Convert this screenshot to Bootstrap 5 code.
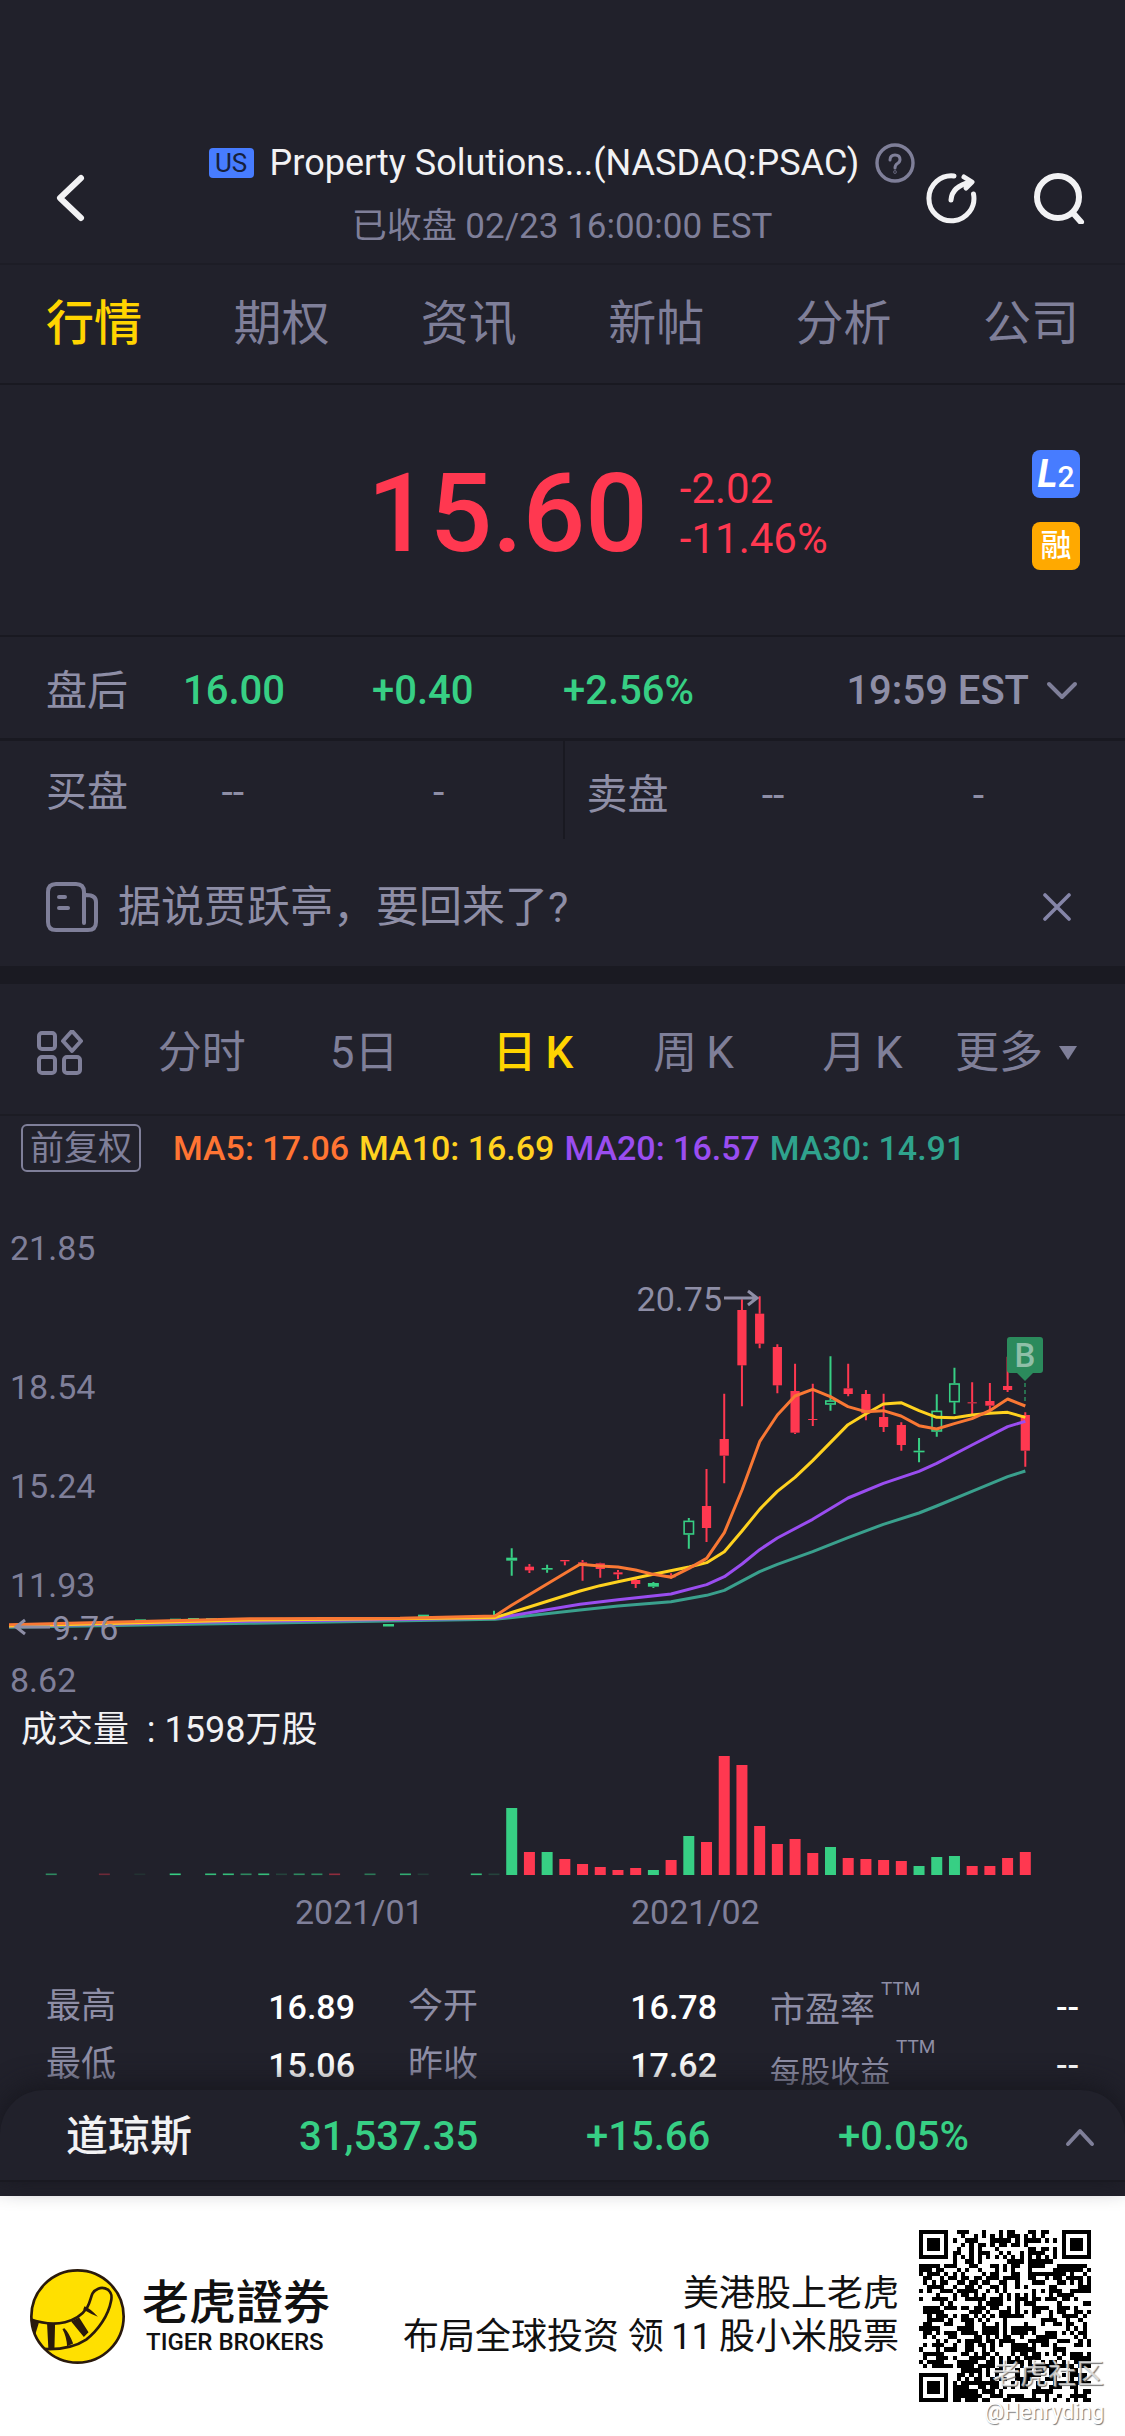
<!DOCTYPE html>
<html lang="zh-CN">
<head>
<meta charset="utf-8">
<meta name="viewport" content="width=device-width, initial-scale=1">
<title>PSAC 行情</title>
<link href="https://cdn.jsdelivr.net/npm/bootstrap@5.3.0/dist/css/bootstrap.min.css" rel="stylesheet">
<style>
:root{--ink:#21212b;--line:#191921;--dim:#7f7f99;--soft:#8e8ea6;--up:#37cf84;--down:#ff3850;--sun:#ffd400}
body{background:var(--ink);color:#f2f2f4;font-family:Roboto,"Noto Sans CJK SC",sans-serif;font-size:36px;line-height:44px}
button{background:none;border:0;padding:0;color:inherit}
svg{display:block}
a{color:inherit;text-decoration:none}
.up{color:var(--up)}.down{color:var(--down)}.dim{color:var(--dim)}.soft{color:var(--soft)}
.topbar{display:grid;grid-template-columns:145px 1fr auto;padding:132px 40px 0 54px;height:265px;border-bottom:2px solid #1d1d26}
.topbar .side{padding-top:40px}
.us{background:#477cff;color:#16203c;border-radius:4px;font-size:26px;line-height:30px;width:45px;text-align:center}
.ttl{font-size:36px;font-weight:400;margin:0;line-height:62px}
.sub{font-size:35px;line-height:66px}
.sections{height:120px;padding:0 46px;border-bottom:2px solid var(--line);font-size:48px}
.sections .active,.spans .active{color:var(--sun);font-weight:500}
.quote{display:grid;grid-template-columns:34% 1fr auto;height:252px;padding-right:45px;border-bottom:2px solid var(--line)}
.quote .down{padding-top:8px}
.price{font-size:110px;line-height:120px;font-weight:500}
.chg{font-size:42px;line-height:50px}
.tag{width:48px;height:48px;border-radius:8px;text-align:center;color:#fff;line-height:48px}
.tag-l2{background:#477cff;font-size:38px;font-weight:700;font-style:italic}
.tag-l2 span{font-size:30px;font-style:normal;font-weight:500}
.tag-m{background:#ffa900;font-size:31px;font-weight:500}
.after{display:grid;grid-template-columns:137fr 189fr 191fr 516fr;align-items:center;height:104px;padding:6px 46px 0;font-size:41px;border-bottom:3px solid var(--line)}
.after .num{font-size:40px;font-weight:500}
.book{display:grid;grid-template-columns:1fr 1fr;height:98px;font-size:41px}
.book>div{display:grid;grid-template-columns:84px 1fr 1fr;padding:4px 21px 0 46px;text-align:center;align-items:center}
.book>div+div{padding:10px 44px 0 22px;border-left:2px solid var(--line)}
.book>div span:first-child{text-align:left}
.news{height:127px;padding:8px 54px 0 46px;font-size:43px}
.news a{padding-left:4px}
.band{height:18px;background:#1a1a22}
.spans{display:grid;grid-template-columns:121fr 172fr 163fr 161fr 169fr 133fr 121fr;align-items:center;height:132px;padding:8px 48px 0 37px;border-bottom:2px solid #1c1c24;font-size:44px;white-space:nowrap}
.spans button{justify-self:start}
.legend-row{height:64px;padding:8px 0 0 21px;font-size:34px;font-weight:500;line-height:48px}
.ma{display:flex;gap:10px;padding-left:10px}
.ma5{color:#ff7433}.ma10{color:#ffd21f}.ma20{color:#9a4df0}.ma30{color:#2fa38d}
.adj{border:2px solid var(--dim);border-radius:6px;font-size:34px;font-weight:400;line-height:44px;padding:0 7px;margin-right:22px;color:var(--dim)}
.vol{height:64px;padding:2px 0 0 21px;line-height:64px;font-size:36px}
.wide{width:100%;height:auto;overflow:visible}
.axis{font:34px Roboto,sans-serif;fill:var(--dim)}
.stats{display:grid;grid-template-columns:1fr 1fr 1fr;column-gap:53px;padding:38px 46px 0;font-size:35px}
.stats>div{display:flex;justify-content:space-between;align-items:center;height:58px}
.stats b{font-size:34px;font-weight:500;color:#fff}
.stats .ttm{font-size:19px;line-height:18px;align-self:start;margin:2px auto 0 6px}
.eps{font-size:30px;padding-top:14px}
.per{padding-top:8px}
.dock{position:relative;z-index:1;margin-top:-4px;background:var(--ink);border-radius:44px 44px 0 0;box-shadow:0 -4px 28px #16161d;height:92px;border-bottom:2px solid var(--line);display:grid;grid-template-columns:233fr 287fr 252fr 257fr;align-items:center;padding:4px 30px 0 66px;font-size:42px;font-weight:500}
.dock .num{font-size:40px}
.brandbar{position:relative;background:#fff;color:#111;margin-top:14px;height:240px;padding:0 34px 0 29px}
.zh{font-family:"Noto Sans CJK TC",sans-serif;font-size:47px;line-height:52px;font-weight:500}
.en{font-size:24px;line-height:34px;font-weight:500;padding-left:4px}
.slogan{line-height:43px;font-size:36px;text-align:right}
.wm{position:absolute;right:21px;bottom:9px;text-align:right;text-shadow:1px 1px 1px #777}
.wm .wm1{font-size:28px;line-height:44px;color:#ffffffb0}
.wm .wm2{font-size:22px;line-height:30px;color:#fff}
</style>
<script src="https://cdn.jsdelivr.net/npm/bootstrap@5.3.0/dist/js/bootstrap.bundle.min.js"></script>
</head>
<body>
<header class="topbar">
  <div class="side"><button type="button" aria-label="返回"><svg width="34" height="52" viewBox="0 0 34 52" fill="none" stroke="#f2f2f4" stroke-width="6" stroke-linecap="round" stroke-linejoin="round"><path d="M27 6 6 26l21 20"/></svg></button></div>
  <div class="text-center text-nowrap">
    <div class="d-flex align-items-center justify-content-center">
      <span class="us me-3">US</span>
      <h1 class="ttl">Property Solutions...(NASDAQ:PSAC)</h1>
      <button type="button" class="ms-3" aria-label="帮助"><svg width="40" height="40" viewBox="0 0 40 40" fill="none" stroke="#7f7f99" stroke-width="3.4" stroke-linecap="round"><circle cx="20" cy="20" r="18"/><path d="M15 17q0-5 5-5t5 4.500q0 2.500-2.500 4T20 25" stroke-width="3"/><circle cx="20" cy="29" r=".4" stroke-width="2.600"/></svg></button>
    </div>
    <div class="sub dim">已收盘 02/23 16:00:00 EST</div>
  </div>
  <div class="side d-flex justify-content-end align-items-start">
    <button type="button" class="me-5" aria-label="刷新"><svg width="52" height="52" viewBox="0 0 52 52" fill="none" stroke="#f2f2f4" stroke-width="5" stroke-linecap="round" stroke-linejoin="round"><path d="M29 4A22.500 22.500 0 1 0 48.500 22"/><path d="M26 28q1-14 20-18M39 5l8 5-6 6"/></svg></button>
    <button type="button" class="ms-2" aria-label="搜索"><svg width="52" height="52" viewBox="0 0 52 52" fill="none" stroke="#f2f2f4" stroke-width="6" stroke-linecap="round"><circle cx="25" cy="25" r="21"/><path d="m40 41 8 9"/></svg></button>
  </div>
</header>

<nav class="sections d-flex justify-content-between align-items-center dim">
  <a class="active" href="#">行情</a><a href="#">期权</a><a href="#">资讯</a><a href="#">新帖</a><a href="#">分析</a><a href="#">公司</a>
</nav>

<section class="quote align-items-center">
  <span></span>
  <div class="d-flex align-items-center down">
    <div class="price">15.60</div>
    <div class="chg ms-4 ps-2"><div>-2.02</div><div>-11.46%</div></div>
  </div>
  <div class="d-grid gap-4"><div class="tag tag-l2">L<span>2</span></div><div class="tag tag-m">融</div></div>
</section>

<section class="after">
  <span class="soft">盘后</span><span class="num up">16.00</span><span class="num up">+0.40</span>
  <div class="d-flex justify-content-between align-items-center"><span class="num up">+2.56%</span>
    <button type="button" class="num soft d-flex align-items-center">19:59 EST<svg class="ms-3" width="34" height="22" viewBox="0 0 34 22" fill="none" stroke="#7f7f99" stroke-width="4" stroke-linecap="round" stroke-linejoin="round"><path d="m4 4 13 13L30 4"/></svg></button></div>
</section>

<section class="book soft">
  <div><span>买盘</span><span>--</span><span>-</span></div>
  <div><span>卖盘</span><span>--</span><span>-</span></div>
</section>

<section class="news soft d-flex align-items-center">
  <svg width="52" height="50" viewBox="0 0 52 50" fill="none" stroke="#7f7f99" stroke-width="4" stroke-linecap="round"><path d="M38 41V10q0-8-8-8H10q-8 0-8 8v30q0 8 8 8h32q8 0 8-8V20q0-7-10-7M13 15h6M13 26h9"/></svg>
  <a class="ms-3 flex-grow-1" href="#">据说贾跃亭，要回来了?</a>
  <button type="button" aria-label="关闭"><svg width="28" height="28" viewBox="0 0 28 28" stroke="#8585a8" stroke-width="3.600" stroke-linecap="round"><path d="m2 2 24 24M26 2 2 26"/></svg></button>
</section>
<div class="band"></div>

<nav class="spans dim">
  <button type="button" aria-label="图表设置"><svg width="46" height="46" viewBox="0 0 46 46" fill="none" stroke="#7f7f99" stroke-width="4" stroke-linejoin="round"><rect x="2" y="3" width="16" height="16" rx="3"/><rect x="2" y="27" width="16" height="16" rx="3"/><rect x="27" y="27" width="16" height="16" rx="3"/><path d="m35 1 9 10-9 10-9-10z"/></svg></button>
  <button type="button">分时</button><button type="button">5日</button><button type="button" class="active">日&thinsp;K</button><button type="button">周&thinsp;K</button><button type="button">月&thinsp;K</button>
  <button type="button" class="d-flex align-items-center">更多<svg class="ms-3" width="18" height="16" viewBox="0 0 18 16" fill="#7f7f99"><path d="M0 1h18L9 15z"/></svg></button>
</nav>

<div class="legend-row d-flex align-items-start text-nowrap">
  <button type="button" class="adj">前复权</button>
  <div class="ma"><span class="ma5">MA5: 17.06</span><span class="ma10">MA10: 16.69</span><span class="ma20">MA20: 16.57</span><span class="ma30">MA30: 14.91</span></div>
</div>

<svg class="wide" viewBox="0 1180 1125 516" role="img" aria-label="日K线图">
  <g id="candles"></g>
  <g fill="none" stroke-width="3" stroke-linejoin="round" id="averages"></g>
  <path d="M1025 1383v18" stroke="#2b8a5c" stroke-width="1.500" stroke-dasharray="4 3"/>
  <path d="M1010 1337h30q3 0 3 3v30q0 3-3 3h-7l-8 8-8-8h-7q-3 0-3-3v-30q0-3 3-3z" fill="#2b8a5c"/>
  <text x="1025" y="1367" text-anchor="middle" font-size="33" font-weight="500" fill="#8fbfa8">B</text>
  <g fill="none" stroke="#8e8ea6" stroke-width="3"><path d="M724 1298h32M748 1291l9 7-9 7M50 1627H17M25 1620l-9 7 9 7"/></g>
  <g class="axis">
    <text x="10" y="1260">21.85</text><text x="10" y="1399">18.54</text><text x="10" y="1498">15.24</text><text x="10" y="1597">11.93</text><text x="10" y="1692">8.62</text>
    <text x="722" y="1311" text-anchor="end" fill="#8e8ea6">20.75</text><text x="52" y="1640" fill="#8e8ea6">9.76</text>
  </g>
</svg>

<div class="vol">成交量&nbsp; : 1598万股</div>

<svg class="wide" viewBox="0 1760 1125 180" role="img" aria-label="成交量图">
  <g id="bars"></g>
  <g class="axis"><text x="295" y="1924">2021/01</text><text x="631" y="1924">2021/02</text></g>
</svg>

<section class="stats soft">
  <div><span>最高</span><b>16.89</b></div><div><span>今开</span><b>16.78</b></div><div><span class="per">市盈率</span><span class="ttm">TTM</span><b>--</b></div>
  <div><span>最低</span><b>15.06</b></div><div><span>昨收</span><b>17.62</b></div><div><span class="eps">每股收益</span><span class="ttm">TTM</span><b>--</b></div>
</section>

<section class="dock">
  <span>道琼斯</span><span class="num up">31,537.35</span><span class="num up">+15.66</span>
  <div class="d-flex justify-content-between align-items-center"><span class="num up">+0.05%</span><button type="button" aria-label="展开"><svg width="30" height="20" viewBox="0 0 30 20" fill="none" stroke="#7f7f99" stroke-width="4" stroke-linecap="round" stroke-linejoin="round"><path d="M3 17 15 4l12 13"/></svg></button></div>
</section>

<footer class="brandbar d-flex align-items-center">
  <svg width="97" height="97" viewBox="0 0 290 290"><defs><clipPath id="disc"><circle cx="145" cy="145" r="140"/></clipPath></defs>
    <circle cx="145" cy="145" r="139" fill="#ffe000"/>
    <g clip-path="url(#disc)" stroke="#2a1a0c" stroke-linejoin="round">
      <path d="M0 152q60 22 108 10 44-11 66-44c10-18 10-30 16-42 16-28 66-20 55 24-8 42-38 86-74 114-42 28-90 30-130 28" fill="none" stroke-width="8"/>
      <path d="M0 150q12 6 30 12l-14 46-16-20zM54 166l24 0-2 78-18 0zM126 160l24-12 28 44-14 14zM106 180q14 14 26 46l-18 8q-2-30-14-52zM166 114q20 8 40 32-20-8-44-22z" fill="#2a1a0c" stroke="none"/>
    </g>
    <circle cx="145" cy="145" r="138" fill="none" stroke="#2a1a0c" stroke-width="8"/>
  </svg>
  <div class="ms-3"><div class="zh">老虎證券</div><div class="en">TIGER BROKERS</div></div>
  <div class="slogan ms-auto me-3">美港股上老虎<br>布局全球投资 领&thinsp;11&thinsp;股小米股票</div>
  <svg class="ms-1" width="172" height="172" viewBox="0 0 41 41" shape-rendering="crispEdges" role="img" aria-label="二维码"><path id="qr" fill="#000"/></svg>
  <div class="wm"><div class="wm1">老虎社区</div><div class="wm2">@Henryding</div></div>
</footer>

<script>
const NS='http://www.w3.org/2000/svg',UP='#37cf84',DOWN='#ff3850',STEP=17.71,LAST=1025.3;
function put(id,tag,attrs){const e=document.createElementNS(NS,tag);for(const k in attrs)e.setAttribute(k,attrs[k]);document.getElementById(id).append(e)}
// newest first: kind (r falling, g rising, h rising hollow), high, body top, body bottom, low in thirds of a unit
const days=[['r',457,465,572,620],['r',290,378,390,396],['r',369,423,437,450],['r',367,427,430,463],['h',323,370,427,462],['h',403,452,515,530],['g',534,572,577,607],['r',487,495,555,572],['r',401,471,501,516],['r',390,402,460,481],['r',311,385,402,409],['h',289,421,434,452],['r',371,477,480,498],['r',311,393,518,522],['r',253,261,376,400],['r',109,161,251,265],['r',118,150,316,439],['r',401,537,587,670],['r',627,738,804,846],['h',774,782,824,866],['r',940,946,952,956],['g',966,969,980,984],['r',956,960,972,984],['r',930,937,943,958],['r',908,910,927,953],['r',900,907,911,962],['r',900,900,904,916],['g',914,924,929,938],['r',912,920,931,939],['g',865,893,902,947],['g',1052,1066,1069,1070]];
const Y=v=>1260+v/3;
days.forEach(([k,h,t,b,l],i)=>{const x=LAST-i*STEP,c=k==='r'?DOWN:UP;
  put('candles','path',{d:`M${x} ${Y(h)}V${Y(t)}M${x} ${Y(b)}V${Y(l)}`,stroke:c,'stroke-width':2});
  if(k==='h')put('candles','rect',{x:x-4.7,y:Y(t)+.7,width:9.4,height:(b-t)/3-1.4,fill:'none',stroke:c,'stroke-width':1.6});
  else put('candles','rect',{x:x-(k==='g'?5.5:4.6),y:Y(t),width:k==='g'?11:9.2,height:(b-t)/3,fill:c})});
[[140,1078],[175,1076],[193,1074],[211,1074],[229,1074],[388,1092],[423,1064]].forEach(([x,v])=>put('candles','rect',{x:x-5,y:Y(v),width:11,height:2.5,fill:UP}));
const lead=[[9,1102],[250,1090],[495,1078]];
const lines=[
 ['#3aa08d',lead,[[0,1050],[114,1038],[273,1025],[380,1006],[433,991],[539,935],[592,913],[698,875],[804,833],[910,793],[1017,759],[1070,738],[1176,694],[1283,650],[1336,633]]],
 ['#9a4df0',[[9,1099],[250,1084],[495,1075]],[[0,1033],[114,1019],[273,1002],[380,974],[433,950],[486,912],[539,869],[592,834],[698,778],[804,714],[910,670],[1017,634],[1070,610],[1176,555],[1283,500],[1336,484]]],
 ['#ffd21f',[[9,1098],[250,1080],[495,1073]],[[0,993],[60,977],[114,965],[220,943],[327,921],[380,908],[433,875],[486,813],[539,748],[592,694],[645,652],[698,602],[751,548],[804,494],[857,462],[910,432],[963,428],[1017,452],[1070,472],[1123,473],[1176,465],[1229,460],[1283,457],[1336,472]]],
 ['#f97834',[[9,1094],[250,1076],[400,1075],[495,1068],[512,1035]],[[0,913],[60,918],[114,921],[167,930],[220,943],[273,952],[327,925],[380,895],[433,818],[486,690],[539,545],[592,465],[645,408],[698,388],[751,410],[804,440],[857,455],[910,452],[963,468],[1017,497],[1070,507],[1123,491],[1176,476],[1229,452],[1283,417],[1336,438]]]];
lines.forEach(([c,a,b])=>put('averages','polyline',{stroke:c,points:[...a.map(([x,v])=>[x,Y(v)]),...b.map(([x,v])=>[580+x/3,Y(v)])].map(p=>p.join()).join(' ')}));
const vols='r23 r17 r9 r9 g19 g18 g9 r14 r15 r16 r17 g28 r22 r36 r31 r49 r110 r119 r33 g39 r15 g5 r7 r5 r8 r11 r16 g23 r23 g67'.split(' ');
vols.forEach((s,i)=>{const h=+s.slice(1);put('bars','rect',{x:LAST-i*STEP-5.5,y:1875-h,width:11,height:h,fill:s[0]==='r'?DOWN:UP})});
[[30,.2],[31,.9],[34,.15],[35,.8],[37,.5],[39,.5,1],[40,.6],[41,.6],[42,.2],[43,.9],[44,.6],[45,.9],[46,.9],[48,1],[50,.1],[52,.35,1],[55,.6]].forEach(([k,o,r])=>put('bars','rect',{x:LAST-k*STEP-5.5,y:1873.5,width:11,height:1.6,fill:r?DOWN:UP,opacity:o}));
// 41-module code: finder, timing and alignment patterns, then the data area
let seed=20210223,d='';const N=41;
const ring=(x,y,cx,cy)=>Math.max(Math.abs(x-cx),Math.abs(y-cy));
for(let y=0;y<N;y++)for(let x=0;x<N;x++){
  seed=(seed*1103515245+12345)%2147483648;let on=(seed>>16)%100<52;
  if(x===6||y===6)on=(x+y)%2===0;
  const al=ring(x,y,34,34);if(al<=2)on=al!==1;
  for(const [cx,cy] of [[3,3],[37,3],[3,37]]){const r=ring(x,y,cx,cy);if(r<=4)on=r<2||r===3}
  if(on)d+=`M${x} ${y}h1v1h-1z`}
document.getElementById('qr').setAttribute('d',d);
</script>
</body>
</html>
